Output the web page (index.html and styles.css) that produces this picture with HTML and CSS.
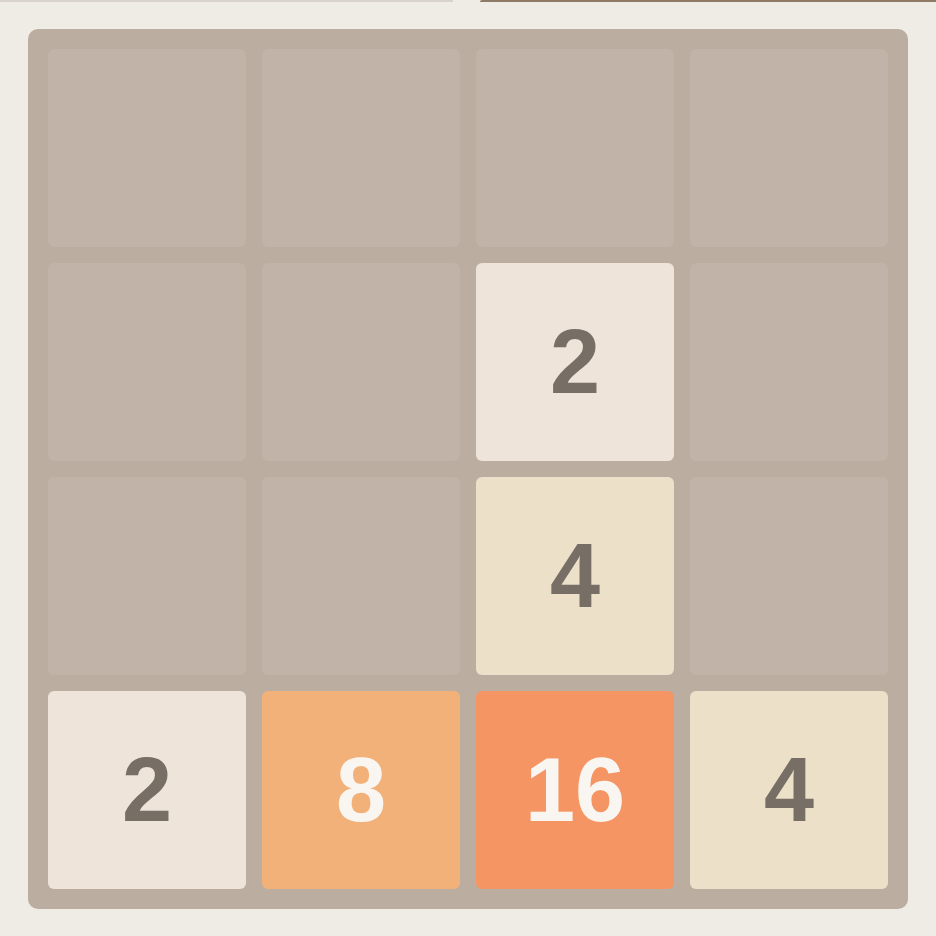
FILE: index.html
```html
<!DOCTYPE html>
<html lang="en">
<head>
    <meta charset="UTF-8">
    <meta name="viewport" content="width=device-width, initial-scale=1.0">
    <title>2048</title>
    <link rel="stylesheet" href="styles.css">
</head>
<body>
    <div class="top-edge">
        <div class="edge-left"></div>
        <div class="edge-right"></div>
    </div>
    <div class="board">
        <div class="cell"></div>
        <div class="cell"></div>
        <div class="cell"></div>
        <div class="cell"></div>

        <div class="cell"></div>
        <div class="cell"></div>
        <div class="cell tile-2">2</div>
        <div class="cell"></div>

        <div class="cell"></div>
        <div class="cell"></div>
        <div class="cell tile-4">4</div>
        <div class="cell"></div>

        <div class="cell tile-2">2</div>
        <div class="cell tile-8">8</div>
        <div class="cell tile-16">16</div>
        <div class="cell tile-4">4</div>
    </div>
</body>
</html>
```

FILE: styles.css
```css
body {
    margin: 0;
    background: #efebe5;
    font-family: "Liberation Sans", Arial, sans-serif;
}

/* bas du bandeau au-dessus de la grille */
.top-edge { display: flex; height: 2px; }
.edge-left { width: 453px; background: #d9d3cc; }
.edge-right { flex: 1; margin-left: 27px; background: #8f7a66; border-top-left-radius: 2px; }

.board {
    display: grid;
    grid-template-columns: repeat(4, 198px);
    grid-auto-rows: 198px;
    gap: 16px;
    width: 840px;
    padding: 20px;
    margin: 27px 0 0 28px;
    background: #bbada0;
    border-radius: 10px;
}

.cell {
    background: #c1b3a7;
    border-radius: 6px;
    display: flex;
    align-items: center;
    justify-content: center;
    font-size: 90px;
    font-weight: bold;
    color: #776e65;
}

.tile-2 { background: #eee4da; }
.tile-4 { background: #ede0c8; }
.tile-8 { background: #f2b179; color: #f9f6f2; }
.tile-16 { background: #f59563; color: #f9f6f2; }
```
